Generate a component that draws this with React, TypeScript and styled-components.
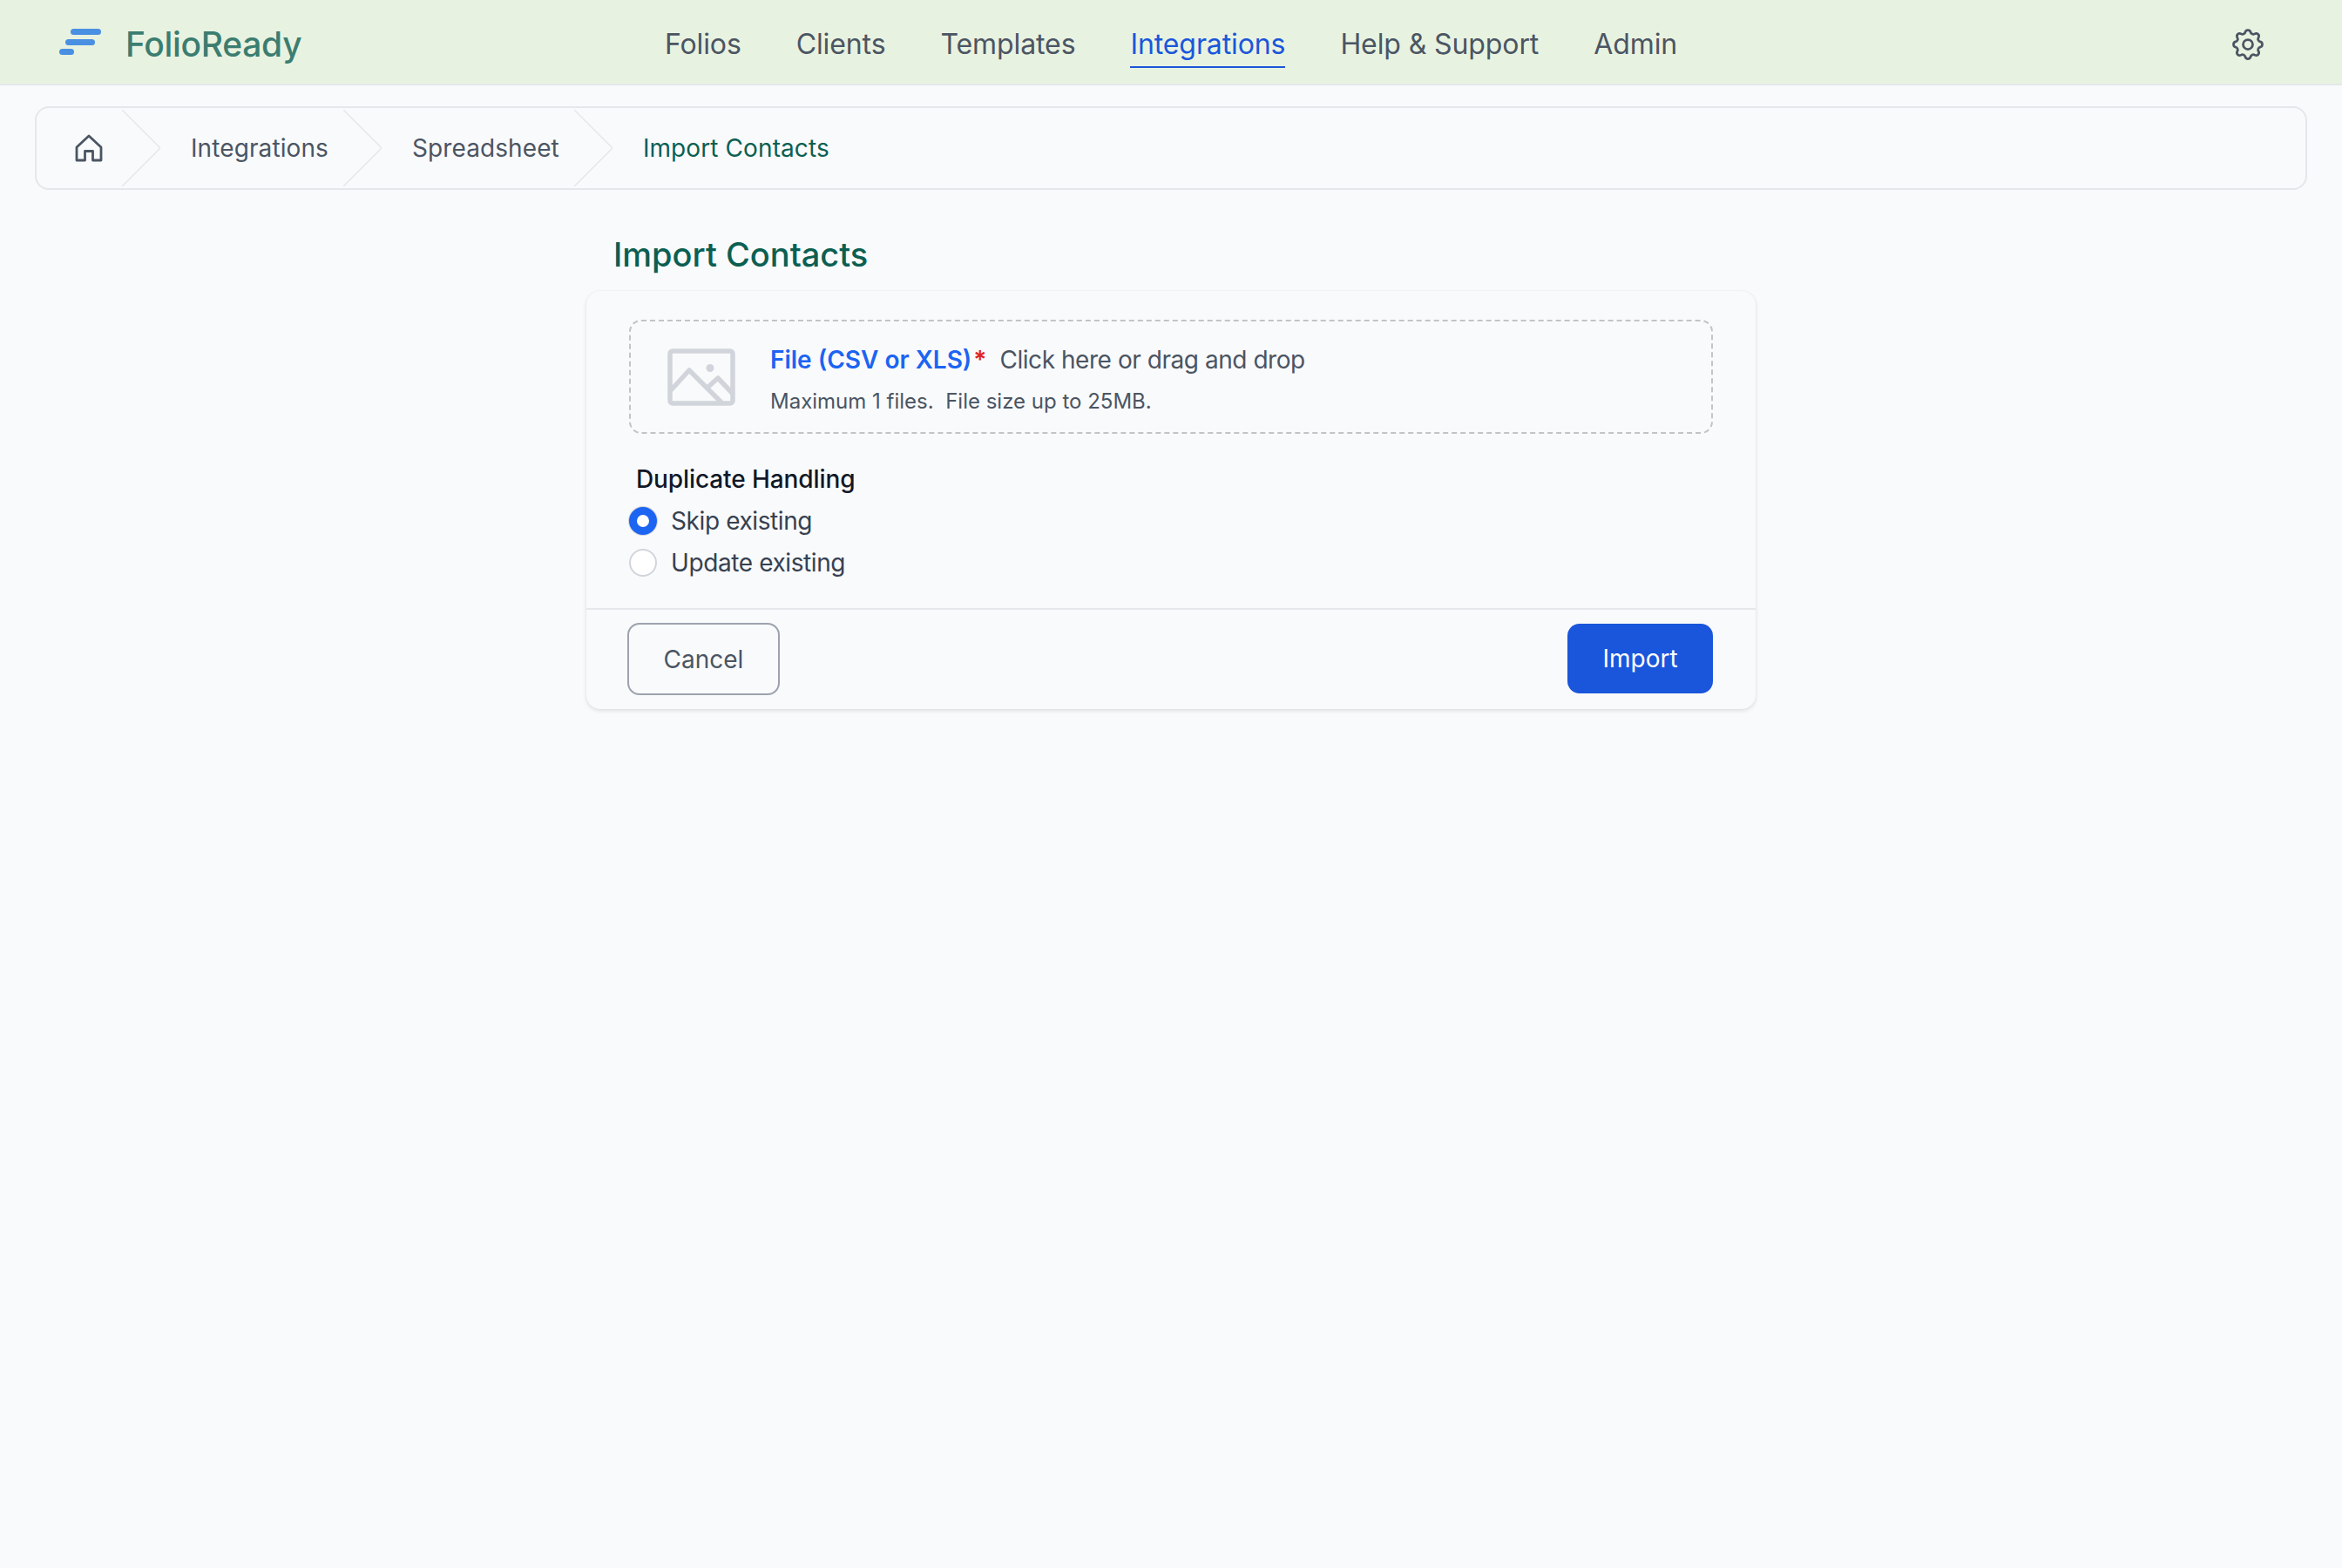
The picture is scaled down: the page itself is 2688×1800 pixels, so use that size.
import styled, { createGlobalStyle } from "styled-components";
import { HiOutlineCog } from "react-icons/hi";

const GlobalStyle = createGlobalStyle`
  html, body {
    margin: 0;
    padding: 0;
    background: #f9fafb;
    font-family: Inter, "Liberation Sans", sans-serif;
  }
  * {
    box-sizing: border-box;
  }
`;

const Page = styled.div`
  min-height: 1800px;
  background: #f9fafb;
`;

const TopBar = styled.header`
  display: grid;
  grid-template-columns: 1fr auto 1fr;
  align-items: center;
  height: 98px;
  padding: 0 68px;
  background: #e8f2e0;
  border-bottom: 2px solid #e5e7eb;
`;

const Brand = styled.a`
  display: flex;
  align-items: center;
  gap: 28px;
  font-size: 39px;
  font-weight: 500;
  letter-spacing: -0.3px;
  color: #3b7d70;
`;

const BrandName = styled.span`
  margin-top: 5px;
`;

const NavList = styled.nav`
  display: flex;
  gap: 63px;
`;

const NavLink = styled.a<{ $active?: boolean }>`
  padding: 9px 0 1px;
  font-size: 32px;
  line-height: 48px;
  letter-spacing: -0.1px;
  color: ${(p) => (p.$active ? "#1a56db" : "#4b5563")};
  border-bottom: 2px solid ${(p) => (p.$active ? "#1a56db" : "transparent")};
`;

const GearButton = styled.button`
  justify-self: end;
  display: flex;
  margin: 6px 18px 0 0;
  padding: 0;
  border: 0;
  background: none;
  color: #4b5563;

  svg path {
    stroke-width: 1.5;
  }
`;

const Crumbs = styled.ol`
  display: flex;
  align-items: center;
  height: 96px;
  margin: 24px 40px 0;
  padding: 0 0 0 44px;
  list-style: none;
  border: 2px solid #e5e7eb;
  border-radius: 16px;
`;

const Crumb = styled.li<{ $current?: boolean }>`
  display: flex;
  align-items: center;
  gap: 35px;
  padding-right: 17px;
  font-size: 28px;
  letter-spacing: 0.1px;
  color: ${(p) => (p.$current ? "#0b5f52" : "#4b5563")};
`;

const HomeLink = styled.a`
  display: flex;
  margin-right: -13px;
  color: #4b5563;
`;

const Main = styled.main`
  width: 1342px;
  margin: 0 auto;
`;

const Title = styled.h1`
  margin: 50px 0 0 31px;
  font-size: 38px;
  line-height: 48px;
  font-weight: 500;
  color: #0b5f52;
`;

const Card = styled.section`
  margin-top: 18px;
  border-radius: 16px;
  background: #f9fafb;
  box-shadow: 0 2px 5px rgba(0, 0, 0, 0.11), 0 0 2px rgba(0, 0, 0, 0.05);
`;

const CardBody = styled.div`
  padding: 33px 49px 28px;
  border-bottom: 2px solid #e5e7eb;
`;

const DropZone = styled.div`
  display: flex;
  align-items: center;
  gap: 40px;
  height: 131px;
  padding-left: 42px;
  border: 2px dashed #c4c4c4;
  border-radius: 14px;
`;

const DropText = styled.div`
  display: flex;
  flex-direction: column;
  gap: 12px;
  padding-top: 4px;
`;

const DropLine = styled.div`
  font-size: 28px;
  line-height: 40px;
  color: #4b5563;
  white-space: pre;
`;

const FileLabel = styled.span`
  font-weight: 600;
  color: #1c64f2;
`;

const Required = styled.span`
  margin: 0 15px 0 2px;
  font-weight: 600;
  color: #e02424;
`;

const DropPrompt = styled.span`
  letter-spacing: -0.45px;
`;

const Hint = styled.div`
  font-size: 24px;
  line-height: 32px;
  color: #4b5563;
  white-space: pre;
`;

const FieldTitle = styled.div`
  margin: 32px 0 4px 8px;
  font-size: 28px;
  line-height: 40px;
  font-weight: 500;
  letter-spacing: -0.1px;
  color: #111827;
`;

const RadioRow = styled.label`
  display: flex;
  align-items: center;
  gap: 16px;
  height: 48px;
  font-size: 28px;
  letter-spacing: -0.4px;
  color: #374151;
`;

const RadioDot = styled.span<{ $checked?: boolean }>`
  width: 32px;
  height: 32px;
  border-radius: 50%;
  border: ${(p) => (p.$checked ? "9px solid #1c64f2" : "2px solid #d1d5db")};
  background: #fff;
  box-shadow: ${(p) => (p.$checked ? "0 0 0 1px #d1d5db" : "none")};
`;

const CardFooter = styled.div`
  display: flex;
  align-items: center;
  justify-content: space-between;
  padding: 15px 49px 16px 47px;
`;

const CancelButton = styled.button`
  width: 175px;
  height: 83px;
  border: 2px solid #9ca3af;
  border-radius: 14px;
  background: transparent;
  font: inherit;
  font-size: 28px;
  color: #4b5563;
`;

const ImportButton = styled.button`
  width: 167px;
  height: 80px;
  margin-top: -1px;
  border: 0;
  border-radius: 14px;
  background: #1a56db;
  font: inherit;
  font-size: 28px;
  color: #fff;
`;

function LogoMark() {
  return (
    <svg width="48" height="30" viewBox="0 0 48 30" fill="#4a90e2">
      <rect x="13" y="0" width="35" height="7" rx="3.5" />
      <rect x="7" y="12" width="34" height="7" rx="3.5" />
      <rect x="0" y="23" width="17" height="7" rx="3.5" />
    </svg>
  );
}

function HomeIcon() {
  return (
    <svg width="32" height="32" viewBox="0 0 32 32" fill="none" stroke="currentColor" strokeWidth="2.8" strokeLinejoin="round">
      <path d="M2 15L16 2l14 13v15h-9.5V19.5h-9V30H2V15z" />
    </svg>
  );
}

function Chevron() {
  return (
    <svg width="44" height="88" viewBox="0 0 44 88" fill="none" stroke="#e5e7eb" strokeWidth="1.5">
      <path d="M0 0l44 44L0 88" />
    </svg>
  );
}

function ImageIcon() {
  return (
    <svg width="78" height="66" viewBox="0 0 78 66" fill="none" stroke="#d1d5db" strokeWidth="5.5" strokeLinejoin="round">
      <rect x="3" y="3" width="72" height="60" rx="3" />
      <circle cx="49" cy="22.5" r="4.5" fill="#d1d5db" stroke="none" />
      <path d="M4 48l21-23 37 37M47 44l11-10 17 18" />
    </svg>
  );
}

const navItems = ["Folios", "Clients", "Templates", "Integrations", "Help & Support", "Admin"];

export default function App() {
  return (
    <Page>
      <GlobalStyle />
      <TopBar>
        <Brand>
          <LogoMark />
          <BrandName>FolioReady</BrandName>
        </Brand>
        <NavList>
          {navItems.map((item) => (
            <NavLink key={item} $active={item === "Integrations"}>
              {item}
            </NavLink>
          ))}
        </NavList>
        <GearButton>
          <HiOutlineCog size={44} />
        </GearButton>
      </TopBar>

      <Crumbs>
        <Crumb>
          <HomeLink>
            <HomeIcon />
          </HomeLink>
          <Chevron />
          Integrations
        </Crumb>
        <Crumb>
          <Chevron />
          Spreadsheet
        </Crumb>
        <Crumb $current>
          <Chevron />
          Import Contacts
        </Crumb>
      </Crumbs>

      <Main>
        <Title>Import Contacts</Title>
        <Card>
          <CardBody>
            <DropZone>
              <ImageIcon />
              <DropText>
                <DropLine>
                  <FileLabel>File (CSV or XLS)</FileLabel>
                  <Required>*</Required>
                  <DropPrompt>Click here or drag and drop</DropPrompt>
                </DropLine>
                <Hint>Maximum 1 files.  File size up to 25MB.</Hint>
              </DropText>
            </DropZone>
            <FieldTitle>Duplicate Handling</FieldTitle>
            <RadioRow>
              <RadioDot $checked />
              Skip existing
            </RadioRow>
            <RadioRow>
              <RadioDot />
              Update existing
            </RadioRow>
          </CardBody>
          <CardFooter>
            <CancelButton>Cancel</CancelButton>
            <ImportButton>Import</ImportButton>
          </CardFooter>
        </Card>
      </Main>
    </Page>
  );
}
